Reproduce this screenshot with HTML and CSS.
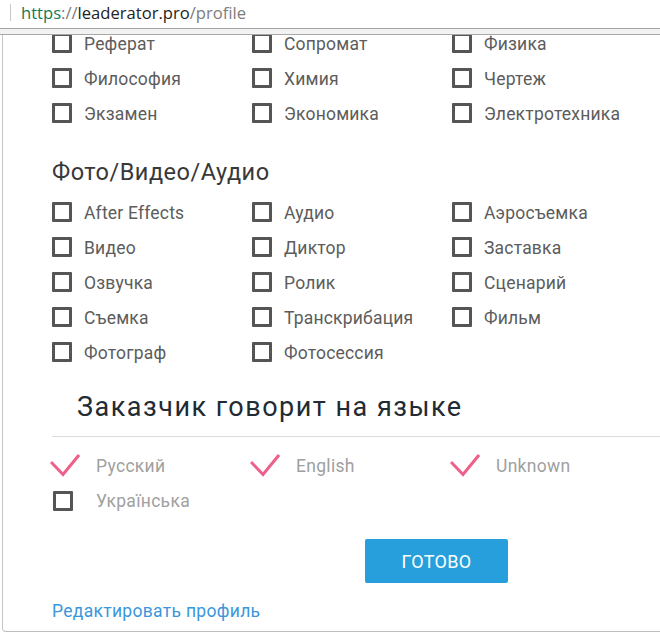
FILE: index.html
```html
<!DOCTYPE html>
<html lang="ru">
<head>
<meta charset="utf-8">
<title>Профиль</title>
<link rel="stylesheet" href="styles.css">
</head>
<body>
<header class="chrome">
  <div class="address">
    <span class="caret"></span>
    <span class="url"><span class="scheme">https</span><span class="dim">://</span><span class="host">leaderator.pro</span><span class="dim">/profile</span></span>
  </div>
  <div class="strip"></div>
</header>
<main class="viewport">
  <section class="card">
    <div class="checks">
      <label class="item"><span class="box"></span>Реферат</label>
      <label class="item"><span class="box"></span>Сопромат</label>
      <label class="item"><span class="box"></span>Физика</label>
      <label class="item"><span class="box"></span>Философия</label>
      <label class="item"><span class="box"></span>Химия</label>
      <label class="item"><span class="box"></span>Чертеж</label>
      <label class="item"><span class="box"></span>Экзамен</label>
      <label class="item"><span class="box"></span>Экономика</label>
      <label class="item"><span class="box"></span>Электротехника</label>
    </div>
    <h3 class="group-title">Фото/Видео/Аудио</h3>
    <div class="checks">
      <label class="item"><span class="box"></span>After Effects</label>
      <label class="item"><span class="box"></span>Аудио</label>
      <label class="item"><span class="box"></span>Аэросъемка</label>
      <label class="item"><span class="box"></span>Видео</label>
      <label class="item"><span class="box"></span>Диктор</label>
      <label class="item"><span class="box"></span>Заставка</label>
      <label class="item"><span class="box"></span>Озвучка</label>
      <label class="item"><span class="box"></span>Ролик</label>
      <label class="item"><span class="box"></span>Сценарий</label>
      <label class="item"><span class="box"></span>Съемка</label>
      <label class="item"><span class="box"></span>Транскрибация</label>
      <label class="item"><span class="box"></span>Фильм</label>
      <label class="item"><span class="box"></span>Фотограф</label>
      <label class="item"><span class="box"></span>Фотосессия</label>
    </div>
    <h2 class="lang-title">Заказчик говорит на языке</h2>
    <div class="divider"></div>
    <div class="langs">
      <label class="lang"><span class="slot"><svg class="tick" width="30" height="24" viewBox="0 0 30 24"><polyline points="1,9 13,21.5 29,2" /></svg></span>Русский</label>
      <label class="lang"><span class="slot"><svg class="tick" width="30" height="24" viewBox="0 0 30 24"><polyline points="1,9 13,21.5 29,2" /></svg></span>English</label>
      <label class="lang"><span class="slot"><svg class="tick" width="30" height="24" viewBox="0 0 30 24"><polyline points="1,9 13,21.5 29,2" /></svg></span>Unknown</label>
      <label class="lang"><span class="slot"><span class="box box-lang"></span></span>Українська</label>
    </div>
    <div class="actions">
      <button class="btn" type="button">Готово</button>
    </div>
    <a class="edit-link" href="#">Редактировать профиль</a>
  </section>
</main>
</body>
</html>
```
FILE: styles.css
```css
* { box-sizing: border-box; }

html, body {
  margin: 0;
  padding: 0;
  background: #fff;
  width: 660px;
  height: 637px;
  overflow: hidden;
}

body {
  font-family: Roboto, "Noto Sans", Arial, sans-serif;
}

.chrome {
  background: #fff;
}

.address {
  height: 29px;
  display: flex;
  align-items: center;
  border-bottom: 1px solid #a3a3a3;
  padding-left: 10px;
}

.caret {
  width: 1px;
  height: 17px;
  background: #c8c8c8;
  margin-right: 10px;
  margin-top: -4px;
}

.url {
  font-family: "Open Sans", "Noto Sans", sans-serif;
  font-size: 16.6px;
  margin-top: -3px;
}

.scheme { color: #157a52; }
.dim { color: #7c7c7c; }
.host { color: #222; }

.strip {
  height: 6px;
  background: #f2f2f2;
  border-bottom: 1px solid #a8a8a8;
}

.viewport {
  height: 601px;
  overflow: hidden;
}

.card {
  margin-top: -9px;
  margin-left: 2px;
  border-left: 1px solid #c4c4c4;
  border-bottom: 1px solid #bdbdbd;
  border-bottom-left-radius: 4px;
  padding: 0 0 10px 49px;
}

.checks {
  display: grid;
  grid-template-columns: repeat(3, 200px);
  grid-auto-rows: 35px;
}

.item {
  display: flex;
  align-items: center;
  gap: 12px;
  font-size: 17.5px;
  line-height: 18px;
  letter-spacing: 0.2px;
  color: #5c5c5c;
  white-space: nowrap;
}

.box {
  width: 20px;
  height: 20px;
  border: 3px solid #555;
  border-radius: 1px;
  flex: none;
  margin-top: -2px;
}

.group-title {
  margin: 26px 0 8px;
  font-weight: 400;
  font-size: 23.5px;
  line-height: 30px;
  letter-spacing: 0.5px;
  color: #383838;
}

.lang-title {
  margin: 20px 0 0 25px;
  font-weight: 400;
  font-size: 27px;
  line-height: 34px;
  letter-spacing: 1.5px;
  color: #222b33;
}

.divider {
  margin-top: 12px;
  height: 1px;
  background: #dcdcdc;
}

.langs {
  margin-left: -2px;
  margin-top: 11px;
  display: grid;
  grid-template-columns: repeat(3, 200px);
  grid-auto-rows: 35px;
}

.lang {
  display: flex;
  align-items: center;
  gap: 16px;
  font-size: 17.5px;
  letter-spacing: 0.3px;
  color: #a0a0a0;
}

.slot {
  width: 30px;
  height: 24px;
  display: flex;
  align-items: center;
  flex: none;
}

.tick {
  display: block;
  fill: none;
  stroke: #ee5f8a;
  stroke-width: 3;
  margin-top: -2px;
}

.box-lang {
  margin-left: 3px;
  margin-top: 0;
}

.actions {
  margin-top: 21px;
  padding-left: 313px;
}

.btn {
  width: 143px;
  height: 44px;
  border: none;
  border-radius: 2px;
  background: #279fdd;
  color: #fff;
  font-family: Roboto, sans-serif;
  font-size: 18px;
  text-transform: uppercase;
  letter-spacing: 0.3px;
}

.edit-link {
  display: block;
  margin-top: 18px;
  font-size: 17.5px;
  line-height: 20px;
  letter-spacing: 0.3px;
  color: #3b96dc;
  text-decoration: none;
}
```
